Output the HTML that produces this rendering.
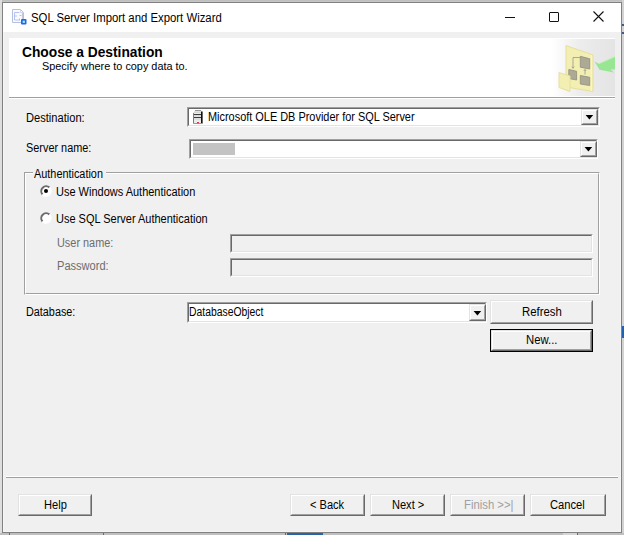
<!DOCTYPE html>
<html><head><meta charset="utf-8">
<style>
*{margin:0;padding:0;box-sizing:border-box}
html,body{width:624px;height:535px;overflow:hidden;background:#e6e6e6;font-family:"Liberation Sans",sans-serif;color:#000}
.a{position:absolute}
.t{position:absolute;white-space:nowrap;line-height:1;transform-origin:0 0}
.sunk{position:absolute;border-style:solid;border-width:1px;border-color:#a0a0a0 #fff #fff #a0a0a0}
.sunk>.in{position:absolute;left:0;top:0;right:0;bottom:0;border-style:solid;border-width:1px;border-color:#696969 #e3e3e3 #e3e3e3 #696969}
.btn{position:absolute;border-style:solid;border-width:1px;border-color:#e3e3e3 #696969 #696969 #e3e3e3;background:#f0f0f0}
.btn>.in{position:absolute;left:0;top:0;right:0;bottom:0;border-style:solid;border-width:1px;border-color:#fff #a0a0a0 #a0a0a0 #fff}
.dd{position:absolute;width:17px;height:16px;background:#f0f0f0;border-style:solid;border-width:1px;border-color:#e3e3e3 #696969 #696969 #e3e3e3}
.dd>.in{position:absolute;left:0;top:0;right:0;bottom:0;border-style:solid;border-width:1px;border-color:#fff #a0a0a0 #a0a0a0 #fff}
.tri{position:absolute;width:0;height:0;border-left:3.5px solid transparent;border-right:3.5px solid transparent;border-top:4px solid #000}
.etch{position:absolute;height:2px;border-top:1px solid #a0a0a0;border-bottom:1px solid #fff}

</style></head>
<body>
<!-- outer background strips -->
<div class="a" style="left:0;top:0;width:624px;height:2px;background:linear-gradient(#bcbcbc,#c9c9c9)"></div>
<div class="a" style="left:0;top:0;width:2px;height:535px;background:#dedede"></div>
<div class="a" style="left:622px;top:0;width:2px;height:535px;background:#d2d2d2"></div>
<div class="a" style="left:0;top:533px;width:624px;height:2px;background:#bfbfbf"></div>
<div class="a" style="left:622px;top:24px;width:2px;height:2px;background:#3b5f8c"></div>
<div class="a" style="left:622px;top:32px;width:2px;height:2px;background:#3b5f8c"></div>
<div class="a" style="left:622px;top:326px;width:2px;height:12px;background:#1f63b8"></div>
<div class="a" style="left:287px;top:533px;width:36px;height:2px;background:#2a64a8"></div>
<div class="a" style="left:9px;top:533px;width:1px;height:2px;background:#6a6a6a"></div>
<div class="a" style="left:103px;top:533px;width:1px;height:2px;background:#6a6a6a"></div>
<div class="a" style="left:285px;top:533px;width:1px;height:2px;background:#6a6a6a"></div>
<div class="a" style="left:563px;top:533px;width:14px;height:2px;background:#d6d6d6"></div>
<div class="a" style="left:577px;top:533px;width:1px;height:2px;background:#6a6a6a"></div>

<!-- window -->
<div class="a" style="left:2px;top:2px;width:620px;height:531px;border:1px solid #818181;background:#f0f0f0"></div>
<div class="a" style="left:3px;top:3px;width:618px;height:529px;border:1px solid #f5f5f5;border-top:0"></div>
<!-- title bar -->
<div class="a" style="left:3px;top:3px;width:618px;height:29px;background:#fff"></div>
<svg class="a" style="left:11px;top:8px" width="16" height="17" viewBox="0 0 16 17">
  <path d="M1.5 1.5 H9.5 L12.5 4.5 V14.5 H1.5 Z" fill="#f9fbff" stroke="#b3c0e3" stroke-width="1"/>
  <path d="M11.5 5 V14" stroke="#c3cadb" stroke-width="1.2"/>
  <path d="M9.5 1.5 V4.5 H12.5" stroke="#c6d0ec" stroke-width="0.8" fill="none"/>
  <path d="M3.5 4.5 H8.5 M3.5 4.5 V12 M3.5 8 H6 M3.5 12 H8.5 M8.5 7.5 H10.5 M8.5 10.5 V12.5" stroke="#aebcec" stroke-width="0.9" fill="none"/>
  <rect x="10" y="11" width="5.5" height="5.5" rx="1" fill="#1d6be0"/>
  <rect x="11.7" y="12.7" width="2.2" height="2.2" fill="#a8ecff"/>
</svg>
<!-- title buttons -->
<div class="a" style="left:505px;top:17px;width:10px;height:1px;background:#111"></div>
<div class="a" style="left:549px;top:12px;width:10px;height:10px;border:1px solid #111;border-radius:1px"></div>
<svg class="a" style="left:593px;top:11px" width="11" height="11" viewBox="0 0 11 11"><path d="M0.5 0.5 L10.5 10.5 M10.5 0.5 L0.5 10.5" stroke="#111" stroke-width="1.1"/></svg>

<!-- header panel -->
<div class="a" style="left:9px;top:38px;width:606px;height:59px;background:#fff"></div>
<div class="a" style="left:552px;top:39px;width:63px;height:57px;background:linear-gradient(to right,#fff 0%,#ececec 45%,#e4e4e4 100%)"></div>
<svg class="a" style="left:552px;top:39px" width="63" height="57" viewBox="0 0 63 57">
  <path d="M14 6.5 L41 16 L41 52.5 L14 48 Z" fill="#f3efb3" stroke="#e6df9c" stroke-width="1"/>
  <path d="M39.5 16 V52" stroke="#f8f5d0" stroke-width="1.2"/>
  <path d="M28.3 17.3 L37.7 19.8 L37.7 30 L28.3 28.2 Z" fill="#acaa97" stroke="#96937f" stroke-width="0.9"/>
  <path d="M16.8 30.5 L24.6 32.3 L24.6 41 L16.8 39.5 Z" fill="#acaa97" stroke="#96937f" stroke-width="0.9"/>
  <path d="M28.3 36.5 L37.7 38.3 L37.7 46.5 L28.3 45 Z" fill="#acaa97" stroke="#96937f" stroke-width="0.9"/>
  <path d="M21 29 V18.5 H28" stroke="#a3a08c" stroke-width="0.9" fill="none"/>
  <path d="M19.8 27.5 L21 29.5 L22.2 27.5" stroke="#a3a08c" stroke-width="0.8" fill="none"/>
  <path d="M33 35.5 V30.5 M31.8 32 L33 30.5 L34.2 32" stroke="#a3a08c" stroke-width="0.9" fill="none"/>
  <path d="M7 33.5 L18 37 L18 52.5 L7 48.5 Z" fill="#f3efb3" stroke="#e6df9c" stroke-width="1"/>
  <path d="M42.4 22.2 L46.7 24.8 L63 17.5 L63 30.5 L58.5 30.5 L62 33.5 L47.5 30.8 Z" fill="#98e693"/><path d="M46.7 24.8 L63 17.5" stroke="#c2f2b8" stroke-width="1"/>
</svg>
<div class="etch" style="left:9px;top:97px;width:606px"></div>

<!-- Destination -->
<div class="sunk" style="left:187px;top:107px;width:413px;height:20px;background:#fff"><div class="in"></div></div>
<svg class="a" style="left:192px;top:109px" width="12" height="16" viewBox="0 0 12 16">
  <path d="M1 4 L3 1 H9 L11 3 V15 H1 Z" fill="#ececec"/>
  <path d="M1.5 4 V14.5" stroke="#7d7d7d" stroke-width="1"/>
  <path d="M3 1.5 H9" stroke="#9a9a9a" stroke-width="1"/>
  <path d="M9.8 2.5 V14.5" stroke="#111" stroke-width="1.6"/>
  <path d="M2 5.5 H9 M2 8.5 H9" stroke="#3c3c3c" stroke-width="1"/>
  <path d="M2 3.2 H9 M2 6.8 H9 M2 10 H9" stroke="#c8c8c8" stroke-width="0.8"/>
  <path d="M1.5 14.5 H10" stroke="#9a9a9a" stroke-width="1"/>
  <rect x="5" y="13" width="2" height="1.3" fill="#e23c3c"/>
</svg>
<div class="dd" style="left:581px;top:109px"><div class="in"></div></div>
<svg class="a" style="left:585px;top:115px" width="9" height="5"><path d="M0.6 0 H8.2 L4.4 4.6 Z" fill="#000"/></svg>

<!-- Server name -->
<div class="sunk" style="left:189px;top:139px;width:409px;height:20px;background:#fff"><div class="in"></div></div>
<div class="a" style="left:193px;top:143px;width:42px;height:12px;background:#c3c3c3"></div>
<div class="dd" style="left:580px;top:141px"><div class="in"></div></div>
<svg class="a" style="left:584px;top:147px" width="9" height="5"><path d="M0.6 0 H8.2 L4.4 4.6 Z" fill="#000"/></svg>

<!-- Authentication group -->
<div class="a" style="left:24px;top:172px;width:576px;height:123px;border:1px solid #a0a0a0;border-right-color:#fff;border-bottom-color:#fff"></div>
<div class="a" style="left:25px;top:173px;width:574px;height:121px;border:1px solid #fff;border-right-color:#a0a0a0;border-bottom-color:#a0a0a0"></div>
<div class="a" style="left:33px;top:165px;width:73px;height:12px;background:#f0f0f0"></div>

<svg class="a" style="left:40px;top:185px" width="12" height="12" viewBox="0 0 12 12">
  <circle cx="6" cy="6" r="4.5" fill="#fff"/>
  <path d="M2.54 9.46 A4.9 4.9 0 0 1 9.46 2.54" stroke="#6c6c6c" stroke-width="2" fill="none"/>
  <path d="M9.46 2.54 A4.9 4.9 0 0 1 2.54 9.46" stroke="#fff" stroke-width="2" fill="none"/>
  <circle cx="6" cy="6" r="2" fill="#000"/>
</svg>
<svg class="a" style="left:40px;top:212px" width="12" height="12" viewBox="0 0 12 12">
  <circle cx="6" cy="6" r="4.5" fill="#fff"/>
  <path d="M2.54 9.46 A4.9 4.9 0 0 1 9.46 2.54" stroke="#6c6c6c" stroke-width="2" fill="none"/>
  <path d="M9.46 2.54 A4.9 4.9 0 0 1 2.54 9.46" stroke="#fff" stroke-width="2" fill="none"/>
</svg>

<div class="sunk" style="left:230px;top:234px;width:363px;height:19px"><div class="in"></div></div>
<div class="sunk" style="left:230px;top:258px;width:363px;height:19px"><div class="in"></div></div>

<!-- Database -->
<div class="sunk" style="left:187px;top:302px;width:300px;height:21px;background:#fff"><div class="in"></div></div>
<div class="dd" style="left:469px;top:304px;height:17px"><div class="in"></div></div>
<svg class="a" style="left:473px;top:311px" width="9" height="5"><path d="M0.6 0 H8.2 L4.4 4.6 Z" fill="#000"/></svg>

<div class="btn" style="left:490px;top:300px;width:103px;height:24px"><div class="in"></div></div>
<div class="a" style="left:490px;top:329px;width:103px;height:23px;border:1px solid #000"></div>
<div class="btn" style="left:491px;top:330px;width:101px;height:21px"><div class="in"></div></div>

<!-- bottom -->
<div class="etch" style="left:6px;top:476px;width:612px;border-top-color:#fff;border-bottom-color:#a0a0a0"></div>
<div class="btn" style="left:18px;top:494px;width:74px;height:22px"><div class="in"></div></div>
<div class="btn" style="left:290px;top:494px;width:75px;height:22px"><div class="in"></div></div>
<div class="btn" style="left:370px;top:494px;width:75px;height:22px"><div class="in"></div></div>
<div class="btn" style="left:450px;top:494px;width:75px;height:22px"><div class="in"></div></div>
<div class="btn" style="left:530px;top:494px;width:76px;height:22px"><div class="in"></div></div>

<div class="t" style="left:30.59px;top:12px;font-size:12.5px;font-weight:400;color:#000;transform:scaleX(0.9082)">SQL Server Import and Export Wizard</div>
<div class="t" style="left:21.92px;top:45px;font-size:14px;font-weight:700;color:#000;transform:scaleX(0.9830)">Choose a Destination</div>
<div class="t" style="left:41.61px;top:61px;font-size:11px;font-weight:400;color:#000;transform:scaleX(0.9883)">Specify where to copy data to.</div>
<div class="t" style="left:25.97px;top:112px;font-size:12px;font-weight:400;color:#000;transform:scaleX(0.9262)">Destination:</div>
<div class="t" style="left:25.99px;top:142px;font-size:12px;font-weight:400;color:#000;transform:scaleX(0.9071)">Server name:</div>
<div class="t" style="left:207.89px;top:111px;font-size:12px;font-weight:400;color:#000;transform:scaleX(0.9102)">Microsoft OLE DB Provider for SQL Server</div>
<div class="t" style="left:34.10px;top:168px;font-size:12px;font-weight:400;color:#000;transform:scaleX(0.9067)">Authentication</div>
<div class="t" style="left:55.98px;top:186px;font-size:12px;font-weight:400;color:#000;transform:scaleX(0.9160)">Use Windows Authentication</div>
<div class="t" style="left:55.98px;top:213px;font-size:12px;font-weight:400;color:#000;transform:scaleX(0.9152)">Use SQL Server Authentication</div>
<div class="t" style="left:57.29px;top:237px;font-size:12px;font-weight:400;color:#6d6d6d;transform:scaleX(0.9083)">User name:</div>
<div class="t" style="left:57.28px;top:260px;font-size:12px;font-weight:400;color:#6d6d6d;transform:scaleX(0.9222)">Password:</div>
<div class="t" style="left:26.00px;top:306px;font-size:12px;font-weight:400;color:#000;transform:scaleX(0.9019)">Database:</div>
<div class="t" style="left:189.44px;top:306px;font-size:12px;font-weight:400;color:#000;transform:scaleX(0.8647)">DatabaseObject</div>
<div class="t" style="left:521.55px;top:306px;font-size:12px;font-weight:400;color:#000;transform:scaleX(0.9475)">Refresh</div>
<div class="t" style="left:525.76px;top:334px;font-size:12px;font-weight:400;color:#000;transform:scaleX(0.9419)">New...</div>
<div class="t" style="left:43.87px;top:499px;font-size:12px;font-weight:400;color:#000;transform:scaleX(0.9261)">Help</div>
<div class="t" style="left:310.18px;top:499px;font-size:12px;font-weight:400;color:#000;transform:scaleX(0.9222)">&lt; Back</div>
<div class="t" style="left:391.68px;top:499px;font-size:12px;font-weight:400;color:#000;transform:scaleX(0.9206)">Next &gt;</div>
<div class="t" style="left:463.86px;top:499px;font-size:12px;font-weight:400;color:#a0a0a0;transform:scaleX(0.9440)">Finish &gt;&gt;|</div>
<div class="t" style="left:549.87px;top:499px;font-size:12px;font-weight:400;color:#000;transform:scaleX(0.9306)">Cancel</div>
</body></html>
